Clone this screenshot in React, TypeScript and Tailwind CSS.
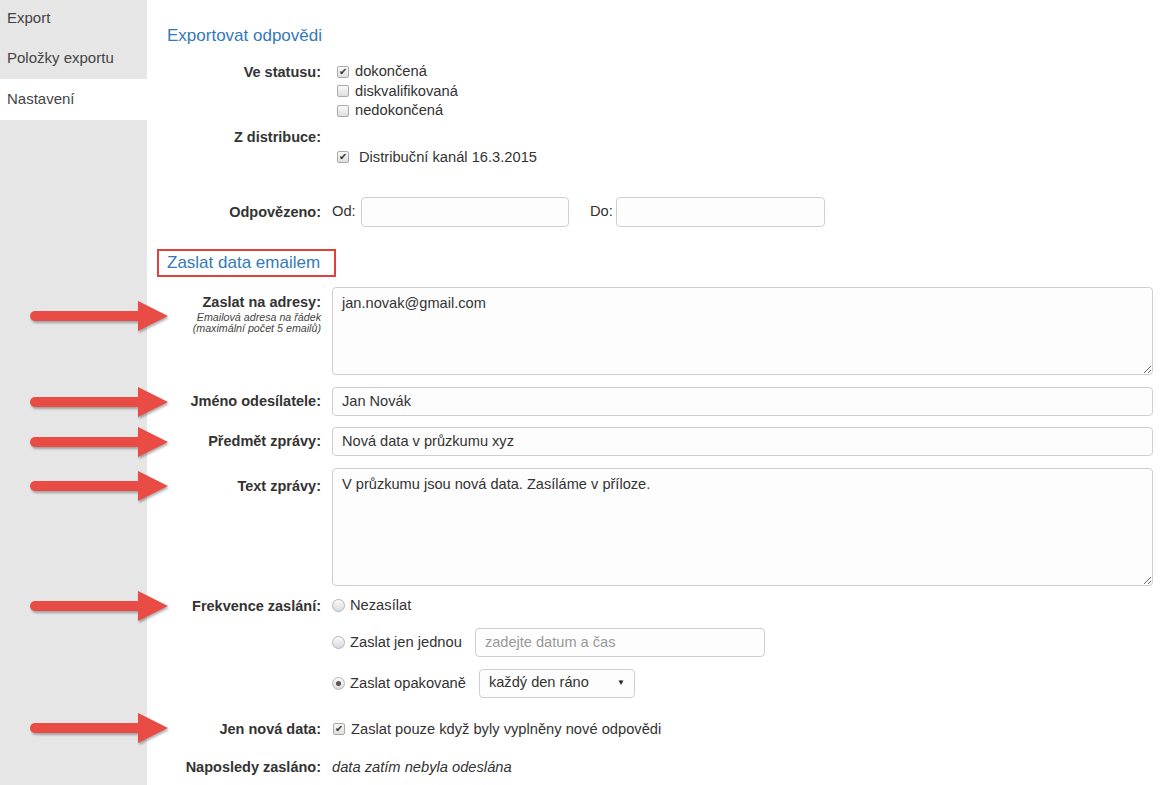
const font = { fontFamily: '"Liberation Sans", Arial, sans-serif' };

const Arrow = ({ className }: { className: string }) => (
  <svg
    width="142"
    height="34"
    viewBox="0 0 142 34"
    className={`absolute left-[-117px] drop-shadow-[1px_2px_1px_rgba(0,0,0,0.3)] ${className}`}
  >
    <rect x="0" y="12" width="112" height="10" rx="5" fill="#e84c45" />
    <polygon points="108,2 138,17 108,32" fill="#e84c45" />
  </svg>
);

const Check = ({ checked }: { checked?: boolean }) => (
  <span className="inline-flex h-[12px] w-[12px] shrink-0 items-center justify-center rounded-[2px] border border-[#a9a9a9] bg-gradient-to-b from-[#fafafa] to-[#dedede] text-[10px] leading-none text-[#333]">
    {checked ? "✔" : ""}
  </span>
);

const Radio = ({ checked }: { checked?: boolean }) => (
  <span className="inline-flex h-[13px] w-[13px] shrink-0 items-center justify-center rounded-full border border-[#b5b5b5] bg-gradient-to-b from-[#fbfbfb] to-[#dadada]">
    {checked && <span className="h-[5px] w-[5px] rounded-full bg-[#555]" />}
  </span>
);

const Label = ({ children }: { children: React.ReactNode }) => (
  <div className="w-[174px] shrink-0 text-right text-[14.5px] font-bold leading-[20px] text-[#333]">
    {children}
  </div>
);

const inputCls =
  "rounded-[4px] border border-[#cfcfcf] bg-[#fdfdfd] px-[9px] text-[14.6px] text-[#333]";

export default function App() {
  return (
    <div
      className="flex h-[785px] w-[1168px] overflow-hidden bg-white text-[14.7px] text-[#333]"
      style={font}
    >
      <div className="w-[147px] shrink-0 bg-[#e6e6e6] text-[15px]">
        <div className="flex h-[37px] items-center pl-[7px] text-[#444]">Export</div>
        <div className="flex h-[42px] items-center pl-[7px] text-[#444]">Položky exportu</div>
        <div className="flex h-[41px] items-center bg-white pl-[7px] text-[#444]">Nastavení</div>
      </div>

      <div className="flex flex-1 flex-col pr-[15px]">
        <h2 className="ml-[20px] mt-[26px] text-[17px] leading-[20px] text-[#337ab7]">
          Exportovat odpovědi
        </h2>

        <div className="mt-[16px] flex gap-[11px]">
          <Label>Ve statusu:</Label>
          <div className="flex flex-col leading-[19.5px]">
            <div className="flex items-center gap-[6px] pl-[5px]">
              <Check checked />
              <span>dokončená</span>
            </div>
            <div className="flex items-center gap-[6px] pl-[5px]">
              <Check />
              <span>diskvalifikovaná</span>
            </div>
            <div className="flex items-center gap-[6px] pl-[5px]">
              <Check />
              <span>nedokončená</span>
            </div>
          </div>
        </div>

        <div className="mt-[6px] flex gap-[11px]">
          <Label>Z distribuce:</Label>
          <div className="flex items-center gap-[10px] pl-[5px] pt-[20px] leading-[20px]">
            <Check checked />
            <span>Distribuční kanál 16.3.2015</span>
          </div>
        </div>

        <div className="mt-[30px] flex items-center gap-[11px]">
          <Label>Odpovězeno:</Label>
          <div className="flex items-center">
            <span className="w-[29px]">Od:</span>
            <input className={`${inputCls} h-[30px] w-[208px]`} />
            <span className="ml-[21px] w-[26px]">Do:</span>
            <input className={`${inputCls} h-[30px] w-[209px]`} />
          </div>
        </div>

        <div className="ml-[10px] mt-[22px] h-[28px] w-[179px] border-2 border-[#e0413b] pl-[8px] text-[17px] leading-[24px] text-[#337ab7]">
          Zaslat data emailem
        </div>

        <div className="relative mt-[10px] flex gap-[11px]">
          <Arrow className="top-[12px]" />
          <div className="w-[174px] shrink-0 pt-[5px] text-right">
            <div className="text-[14.5px] font-bold leading-[20px]">Zaslat na adresy:</div>
            <div className="text-[10.7px] italic leading-[11px] text-[#444]">Emailová adresa na řádek</div>
            <div className="text-[10.7px] italic leading-[11px] text-[#444]">(maximální počet 5 emailů)</div>
          </div>
          <textarea
            className={`${inputCls} h-[88px] flex-1 resize-y pt-[5px] leading-[20px]`}
            defaultValue="jan.novak@gmail.com"
          />
        </div>

        <div className="relative mt-[12px] flex items-center gap-[11px]">
          <Arrow className="top-[-2px]" />
          <Label>Jméno odesílatele:</Label>
          <input className={`${inputCls} h-[29px] flex-1`} defaultValue="Jan Novák" />
        </div>

        <div className="relative mt-[11px] flex items-center gap-[11px]">
          <Arrow className="top-[-2px]" />
          <Label>Předmět zprávy:</Label>
          <input className={`${inputCls} h-[29px] flex-1`} defaultValue="Nová data v průzkumu xyz" />
        </div>

        <div className="relative mt-[12px] flex gap-[11px]">
          <Arrow className="top-[1px]" />
          <div className="w-[174px] shrink-0 pt-[8px] text-right text-[14.5px] font-bold leading-[20px]">
            Text zprávy:
          </div>
          <textarea
            className={`${inputCls} h-[118px] flex-1 resize-y pt-[5px] leading-[20px]`}
            defaultValue="V průzkumu jsou nová data. Zasíláme v příloze."
          />
        </div>

        <div className="relative mt-[10px] flex gap-[11px]">
          <Arrow className="top-[-7px]" />
          <Label>Frekvence zaslání:</Label>
          <div className="flex flex-col">
            <div className="flex h-[20px] items-center gap-[5px]">
              <Radio />
              <span>Nezasílat</span>
            </div>
            <div className="mt-[12px] flex h-[29px] items-center gap-[5px]">
              <Radio />
              <span>Zaslat jen jednou</span>
              <input
                className={`${inputCls} ml-[8px] h-[29px] w-[290px] placeholder:text-[#999]`}
                placeholder="zadejte datum a čas"
              />
            </div>
            <div className="mt-[12px] flex h-[29px] items-center gap-[5px]">
              <Radio checked />
              <span>Zaslat opakovaně</span>
              <div className={`${inputCls} ml-[8px] flex h-[29px] w-[156px] items-center justify-between`}>
                <span>každý den ráno</span>
                <span className="text-[8px] text-[#222]">▼</span>
              </div>
            </div>
          </div>
        </div>

        <div className="relative mt-[21px] flex gap-[11px]">
          <Arrow className="top-[-8px]" />
          <Label>Jen nová data:</Label>
          <div className="flex items-center gap-[6px] pl-[1px] leading-[20px]">
            <Check checked />
            <span>Zaslat pouze když byly vyplněny nové odpovědi</span>
          </div>
        </div>

        <div className="mt-[18px] flex gap-[11px]">
          <Label>Naposledy zasláno:</Label>
          <div className="italic leading-[20px]">data zatím nebyla odeslána</div>
        </div>
      </div>
    </div>
  );
}
